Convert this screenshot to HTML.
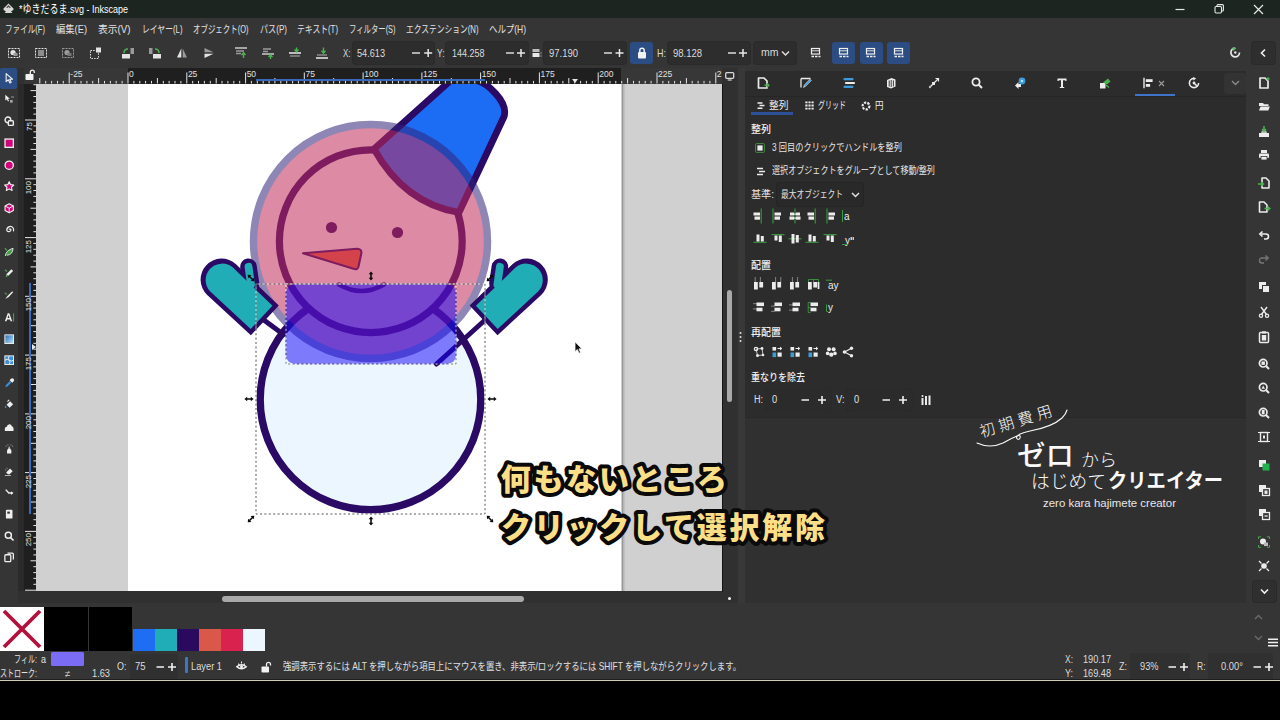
<!DOCTYPE html>
<html lang="ja"><head><meta charset="utf-8"><title>*ゆきだるま.svg - Inkscape</title>
<style>
html,body{margin:0;padding:0}
body{width:1280px;height:720px;position:relative;overflow:hidden;background:#353535;font-family:'Liberation Sans','Noto Sans CJK JP',sans-serif;}
.t{position:absolute;white-space:nowrap;line-height:1;transform-origin:0 50%;}
.a{position:absolute}
svg{position:absolute;overflow:visible}
</style></head>
<body>
<div class="a" style="left:0px;top:0px;width:1280px;height:18px;background:#1c2520;"></div>
<svg style="left:3px;top:3px;" width="11" height="12" viewBox="0 0 11 12"><path d="M5.5 0.5 L10.5 5.5 Q11 7 9.5 7.5 L8 8.5 L9.5 10 L1.5 10 L3 8.5 L1.5 7.5 Q0 7 0.5 5.5 Z" fill="#d8d8d8"/><path d="M5.5 2 L8 4.5 L6.5 5 L5.5 4 L4.5 5 L3 4.5Z" fill="#555"/></svg>
<svg style="left:1175px;top:4px;" width="100" height="11" viewBox="0 0 100 11"><path d="M0.5 5.5 H9.5" stroke="#e8e8e8" stroke-width="1.2"/><rect x="40" y="2.5" width="6.5" height="6.5" rx="1.2" fill="none" stroke="#e8e8e8" stroke-width="1.1"/><path d="M42 2.3 V1.6 Q42 0.6 43 0.6 H47.4 Q48.4 0.6 48.4 1.6 V6 Q48.4 7 47.4 7 H46.8" fill="none" stroke="#e8e8e8" stroke-width="1.1"/><path d="M79 1 L88 10 M88 1 L79 10" stroke="#e8e8e8" stroke-width="1.2"/></svg>
<svg style="left:8px;top:47px;" width="12" height="12" viewBox="0 0 12 12"><rect x="0.5" y="1.5" width="11" height="9" fill="none" stroke="#e4e4e4" stroke-dasharray="2 1"/><circle cx="5" cy="5.5" r="2.6" fill="#e4e4e4"/><rect x="5.5" y="6" width="4" height="3" fill="#9a9a9a"/></svg>
<svg style="left:35px;top:47px;" width="12" height="12" viewBox="0 0 12 12"><rect x="0.5" y="1.5" width="11" height="9" fill="none" stroke="#e4e4e4" stroke-dasharray="2 1"/><path d="M3 4H9M3 6H9M3 8H9" stroke="#e4e4e4" stroke-width="1.2"/></svg>
<svg style="left:62px;top:47px;" width="12" height="12" viewBox="0 0 12 12"><rect x="0.5" y="1.5" width="11" height="9" fill="none" stroke="#9a9a9a" stroke-dasharray="2 1"/><circle cx="5" cy="5.5" r="2.6" fill="#9a9a9a"/><rect x="5.5" y="6" width="4" height="3" fill="#777"/></svg>
<svg style="left:90px;top:47px;" width="12" height="12" viewBox="0 0 12 12"><rect x="0.5" y="3.5" width="8" height="8" fill="none" stroke="#e4e4e4" stroke-dasharray="1.5 1.2"/><rect x="6" y="0.5" width="5" height="5" fill="#e4e4e4"/></svg>
<svg style="left:122px;top:47px;" width="12" height="12" viewBox="0 0 12 12"><rect x="0" y="7" width="8" height="4.5" fill="#e4e4e4"/><rect x="8.5" y="1" width="3.5" height="6" fill="#9a9a9a"/><path d="M2 6 Q2 2 6 2" fill="none" stroke="#4caf50" stroke-width="1.6"/></svg>
<svg style="left:149px;top:47px;" width="12" height="12" viewBox="0 0 12 12"><rect x="4" y="7" width="8" height="4.5" fill="#e4e4e4"/><rect x="0" y="1" width="3.5" height="6" fill="#9a9a9a"/><path d="M10 6 Q10 2 6 2" fill="none" stroke="#4caf50" stroke-width="1.6"/></svg>
<svg style="left:176px;top:47px;" width="12" height="12" viewBox="0 0 12 12"><path d="M5.3 1.5 V10.5 H1 Z" fill="#e4e4e4"/><path d="M6.7 1.5 V10.5 H11 Z" fill="#9a9a9a"/></svg>
<svg style="left:203px;top:47px;" width="12" height="12" viewBox="0 0 12 12"><path d="M1.5 5.3 H10.5 L1.5 1 Z" fill="#9a9a9a"/><path d="M1.5 6.7 H10.5 L1.5 11 Z" fill="#e4e4e4"/></svg>
<svg style="left:235px;top:47px;" width="12" height="12" viewBox="0 0 12 12"><path d="M0 1H12" stroke="#e4e4e4" stroke-width="1.3"/><path d="M1 4H9M1 6.5H6" stroke="#9a9a9a" stroke-width="1.3"/><path d="M8.5 11 V6 M6.5 8 L8.5 5.5 L10.5 8" stroke="#4caf50" stroke-width="1.4" fill="none"/></svg>
<svg style="left:262px;top:47px;" width="12" height="12" viewBox="0 0 12 12"><path d="M1 2H9M1 4.5H6" stroke="#9a9a9a" stroke-width="1.3"/><path d="M0 7H12" stroke="#e4e4e4" stroke-width="1.3"/><path d="M8.5 12 V8.5 M6.5 10 L8.5 8 L10.5 10" stroke="#4caf50" stroke-width="1.4" fill="none"/></svg>
<svg style="left:289px;top:47px;" width="12" height="12" viewBox="0 0 12 12"><path d="M0 6H12" stroke="#e4e4e4" stroke-width="1.6"/><path d="M1 9H11" stroke="#9a9a9a" stroke-width="1.3"/><path d="M7.5 0.5 V4 M5.5 2.5 L7.5 4.8 L9.5 2.5" stroke="#4caf50" stroke-width="1.4" fill="none"/></svg>
<svg style="left:316px;top:47px;" width="12" height="12" viewBox="0 0 12 12"><path d="M1 8H11" stroke="#9a9a9a" stroke-width="1.3"/><path d="M0 11H12" stroke="#e4e4e4" stroke-width="1.6"/><path d="M7.5 0.5 V5.5 M5.5 3.8 L7.5 6.2 L9.5 3.8" stroke="#4caf50" stroke-width="1.4" fill="none"/></svg>
<div class="a" style="left:352.6px;top:41.5px;width:81.0px;height:22.5px;background:#2d2d2d;border-radius:3px;box-shadow:0 0 0 1px #2a2a2a;"></div><svg style="left:411.5px;top:47.75px;" width="21.19999999999999" height="10" viewBox="0 0 21.19999999999999 10"><path d="M0 5H8" stroke="#e8e8e8" stroke-width="1.4"/><path d="M12.199999999999989 5h8M16.19999999999999 1v8" stroke="#e8e8e8" stroke-width="1.5"/></svg>
<div class="a" style="left:446px;top:41.5px;width:82px;height:22.5px;background:#2d2d2d;border-radius:3px;box-shadow:0 0 0 1px #2a2a2a;"></div><svg style="left:506px;top:47.75px;" width="20" height="10" viewBox="0 0 20 10"><path d="M0 5H8" stroke="#e8e8e8" stroke-width="1.4"/><path d="M11 5h8M15 1v8" stroke="#e8e8e8" stroke-width="1.5"/></svg>
<svg style="left:531.5px;top:48px;" width="10" height="10" viewBox="0 0 10 10"><rect x="0.5" y="1" width="7" height="3" fill="#bbb"/><rect x="0.5" y="5" width="7" height="4" fill="#e8e8e8"/><path d="M9 7.5v1" stroke="#ddd"/><path d="M9 4.5v1" stroke="#ddd"/></svg>
<div class="a" style="left:543.8px;top:41.5px;width:82.20000000000005px;height:22.5px;background:#2d2d2d;border-radius:3px;box-shadow:0 0 0 1px #2a2a2a;"></div><svg style="left:604px;top:47.75px;" width="20.5" height="10" viewBox="0 0 20.5 10"><path d="M0 5H8" stroke="#e8e8e8" stroke-width="1.4"/><path d="M11.5 5h8M15.5 1v8" stroke="#e8e8e8" stroke-width="1.5"/></svg>
<div class="a" style="left:630px;top:41.5px;width:23px;height:22.5px;background:#2b4d84;border-radius:3px;"></div>
<svg style="left:636.5px;top:46.5px;" width="10" height="12" viewBox="0 0 10 12"><rect x="1" y="5" width="8" height="6.5" rx="1" fill="#f2f2f2"/><path d="M2.8 5.5V3.5a2.2 2.2 0 0 1 4.4 0V5.5" fill="none" stroke="#f2f2f2" stroke-width="1.5"/></svg>
<div class="a" style="left:668px;top:41.5px;width:81.60000000000002px;height:22.5px;background:#2d2d2d;border-radius:3px;box-shadow:0 0 0 1px #2a2a2a;"></div><svg style="left:728px;top:47.75px;" width="20" height="10" viewBox="0 0 20 10"><path d="M0 5H8" stroke="#e8e8e8" stroke-width="1.4"/><path d="M11 5h8M15 1v8" stroke="#e8e8e8" stroke-width="1.5"/></svg>
<div class="a" style="left:753.6px;top:41.5px;width:42.4px;height:22.5px;background:#2d2d2d;border-radius:3px;box-shadow:0 0 0 1px #2a2a2a;"></div>
<svg style="left:781px;top:50px;" width="9" height="7" viewBox="0 0 9 7"><path d="M1 1.5 L4.5 5 L8 1.5" fill="none" stroke="#e0e0e0" stroke-width="1.5"/></svg>
<svg style="left:811px;top:48px;" width="10" height="11" viewBox="0 0 10 11"><rect x="0.5" y="0.5" width="8" height="5.5" fill="none" stroke="#f0f0f0" stroke-width="1.2"/><path d="M1 2.8h7" stroke="#ddd" stroke-width="1"/><path d="M0.5 8.5h9" stroke="#f0f0f0" stroke-width="1.6" stroke-dasharray="2.5 1"/></svg>
<div class="a" style="left:832.0px;top:41.5px;width:23px;height:22.5px;background:#2b4d84;border-radius:3px;"></div><svg style="left:838.5px;top:48px;" width="10" height="11" viewBox="0 0 10 11"><rect x="0.5" y="0.5" width="8" height="5.5" fill="none" stroke="#f0f0f0" stroke-width="1.2"/><path d="M1 2.8h7" stroke="#ddd" stroke-width="1"/><path d="M0.5 8.5h9" stroke="#f0f0f0" stroke-width="1.6" stroke-dasharray="2.5 1"/></svg>
<div class="a" style="left:859.5px;top:41.5px;width:23px;height:22.5px;background:#2b4d84;border-radius:3px;"></div><svg style="left:866px;top:48px;" width="10" height="11" viewBox="0 0 10 11"><rect x="0.5" y="0.5" width="8" height="5.5" fill="none" stroke="#f0f0f0" stroke-width="1.2"/><path d="M1 2.8h7" stroke="#ddd" stroke-width="1"/><path d="M0.5 8.5h9" stroke="#f0f0f0" stroke-width="1.6" stroke-dasharray="2.5 1"/></svg>
<div class="a" style="left:887.0px;top:41.5px;width:23px;height:22.5px;background:#2b4d84;border-radius:3px;"></div><svg style="left:893.5px;top:48px;" width="10" height="11" viewBox="0 0 10 11"><rect x="0.5" y="0.5" width="8" height="5.5" fill="none" stroke="#f0f0f0" stroke-width="1.2"/><path d="M1 2.8h7" stroke="#ddd" stroke-width="1"/><path d="M0.5 8.5h9" stroke="#f0f0f0" stroke-width="1.6" stroke-dasharray="2.5 1"/></svg>
<svg style="left:1229px;top:46px;" width="13" height="13" viewBox="0 0 13 13"><path d="M10.5 6.5 A4.3 4.3 0 1 1 6.2 2.2" fill="none" stroke="#e8e8e8" stroke-width="1.7"/><path d="M3 1.5 L7.5 2.2 L4 5Z" fill="#5dbb63"/><circle cx="6.3" cy="6.5" r="1.2" fill="#e8e8e8"/></svg>
<div class="a" style="left:1252px;top:41.5px;width:23px;height:22.5px;background:#2e2e2e;border-radius:3px;box-shadow:0 0 0 1px #2a2a2a;"></div>
<svg style="left:1259px;top:48px;" width="8" height="10" viewBox="0 0 8 10"><path d="M6 1.5 L2.5 5 L6 8.5" fill="none" stroke="#f0f0f0" stroke-width="1.6"/></svg>
<div class="a" style="left:0px;top:68px;width:18px;height:523px;background:#353535;"></div>
<div class="a" style="left:0px;top:67.5px;width:16.5px;height:21px;background:#2b4d84;border-radius:2px;"></div>
<svg style="left:3.8px;top:72.8px" width="10.4" height="10.4" viewBox="0 0 12 12"><path d="M2.5 0.8 V10 L5 7.8 L6.8 11.5 L8.3 10.8 L6.6 7.2 H9.8 Z" fill="#2b4d84" stroke="#efefef" stroke-width="1.3" stroke-linejoin="round"/></svg>
<svg style="left:3.8px;top:94.2px" width="10.4" height="10.4" viewBox="0 0 12 12"><path d="M1.5 1 V7.5 L3.3 6 L4.6 8.6 L5.8 8 L4.6 5.6 H6.8 Z" fill="#efefef"/><rect x="7" y="7" width="3" height="3" fill="#aaa"/><path d="M8 3.5h3.5" stroke="#aaa"/></svg>
<svg style="left:3.8px;top:115.8px" width="10.4" height="10.4" viewBox="0 0 12 12"><circle cx="4.5" cy="4.5" r="3.3" fill="none" stroke="#efefef" stroke-width="1.6"/><rect x="5" y="5.5" width="5.8" height="5.3" rx="1" fill="#353535" stroke="#efefef" stroke-width="1.6"/></svg>
<svg style="left:3.8px;top:138.3px" width="10.4" height="10.4" viewBox="0 0 12 12"><rect x="1.2" y="1.2" width="9.6" height="9.6" fill="#d4007a" stroke="#efefef" stroke-width="1.5"/></svg>
<svg style="left:3.8px;top:159.8px" width="10.4" height="10.4" viewBox="0 0 12 12"><circle cx="6" cy="6" r="4.8" fill="#d4007a" stroke="#efefef" stroke-width="1.5"/></svg>
<svg style="left:3.8px;top:181.3px" width="10.4" height="10.4" viewBox="0 0 12 12"><path d="M6 0.8 L7.6 4.2 L11.3 4.6 L8.6 7.2 L9.3 10.9 L6 9.1 L2.7 10.9 L3.4 7.2 L0.7 4.6 L4.4 4.2Z" fill="#d4007a" stroke="#efefef" stroke-width="1.3" stroke-linejoin="round"/></svg>
<svg style="left:3.8px;top:202.8px" width="10.4" height="10.4" viewBox="0 0 12 12"><path d="M6 0.8 L10.8 3.4 V8.7 L6 11.3 L1.2 8.7 V3.4Z" fill="#d4007a" stroke="#efefef" stroke-width="1.3" stroke-linejoin="round"/><path d="M1.2 3.4 L6 6 L10.8 3.4 M6 6 V11.3" fill="none" stroke="#efefef" stroke-width="1.1"/></svg>
<svg style="left:3.8px;top:224.3px" width="10.4" height="10.4" viewBox="0 0 12 12"><path d="M6 6 a1.3 1.3 0 0 1 2 1 a2.6 2.6 0 0 1 -4.6 0.8 a4 4 0 0 1 7 -3.4 a5 5 0 0 1 0.6 3.6" fill="none" stroke="#efefef" stroke-width="1.4" stroke-linecap="round"/></svg>
<svg style="left:3.8px;top:246.8px" width="10.4" height="10.4" viewBox="0 0 12 12"><path d="M1.5 10.5 Q2 4 10.5 1.5 Q10 9 3.5 9.5" fill="#43a047" stroke="#efefef" stroke-width="1"/><path d="M1 1.5l2.5 2.5" stroke="#43a047" stroke-width="1.5"/></svg>
<svg style="left:3.8px;top:268.3px" width="10.4" height="10.4" viewBox="0 0 12 12"><path d="M2 10 L3 7 L8.5 1.5 L10.5 3.5 L5 9 Z" fill="#efefef"/><path d="M2 10 L3 7 L5 9Z" fill="#43a047"/><path d="M1 2l2.5 2" stroke="#43a047" stroke-width="1.4"/></svg>
<svg style="left:3.8px;top:290.3px" width="10.4" height="10.4" viewBox="0 0 12 12"><path d="M1.5 10.5 L4 7 L9.5 1.5 L10.5 2.5 L5.5 8 Z" fill="#efefef"/><path d="M1 3l2.2 2.2" stroke="#43a047" stroke-width="1.4"/></svg>
<svg style="left:3.8px;top:311.8px" width="10.4" height="10.4" viewBox="0 0 12 12"><path d="M1 10.8 L4.3 1.5 H6.2 L9.5 10.8 H7.6 L6.9 8.6 H3.6 L2.9 10.8Z M4.1 7 H6.4 L5.25 3.4Z" fill="#efefef" fill-rule="evenodd"/><path d="M11 1.5v9.5" stroke="#43a047" stroke-width="1.3"/></svg>
<svg style="left:3.8px;top:333.6px" width="10.4" height="10.4" viewBox="0 0 12 12"><defs><linearGradient id="lg1" x1="0" y1="0" x2="1" y2="1"><stop offset="0" stop-color="#1f6fb8"/><stop offset="1" stop-color="#bfe3ff"/></linearGradient></defs><rect x="1" y="1" width="10" height="10" fill="url(#lg1)" stroke="#efefef" stroke-width="1.1"/></svg>
<svg style="left:3.8px;top:355.3px" width="10.4" height="10.4" viewBox="0 0 12 12"><rect x="1" y="1" width="10" height="10" fill="#3d8fd6" stroke="#efefef" stroke-width="1.1"/><path d="M1 6 Q4 4 6 6 T11 6 M6 1 Q4 4 6 6 T6 11" fill="none" stroke="#efefef" stroke-width="1.1"/></svg>
<svg style="left:3.8px;top:377.8px" width="10.4" height="10.4" viewBox="0 0 12 12"><path d="M1.5 10.5 L2.3 8 L6.8 3.5 L8.5 5.2 L4 9.7 Z" fill="#3d8fd6"/><path d="M6.5 2.5 L8 1 a1.5 1.5 0 0 1 3 3 L9.5 5.5 Z" fill="#efefef"/></svg>
<svg style="left:3.8px;top:399.3px" width="10.4" height="10.4" viewBox="0 0 12 12"><path d="M3 6.5 L7 2.5 L10.5 6 L6.5 10 Z" fill="#efefef"/><path d="M1 9 Q1.8 6.5 2.8 9 Q2.8 10.8 1.9 10.8 Q1 10.8 1 9Z" fill="#3d8fd6"/><path d="M4 3l2-2" stroke="#efefef" stroke-width="1.2"/></svg>
<svg style="left:3.8px;top:422.3px" width="10.4" height="10.4" viewBox="0 0 12 12"><path d="M1 10.5 V7.5 Q1 5.5 3.2 5.5 Q3.6 2.5 6.3 2.5 Q8.6 2.5 9 5 Q11 5.3 11 7.5 V10.5Z" fill="#efefef"/></svg>
<svg style="left:3.8px;top:443.8px" width="10.4" height="10.4" viewBox="0 0 12 12"><path d="M3.5 11 V7.5 L5 5 H7 L8.5 7.5 V11Z" fill="#efefef"/><rect x="5.2" y="3" width="1.6" height="2" fill="#bbb"/><path d="M2 2.5h1M4 1h1M7.5 1h1M9.5 2.5h1" stroke="#bbb"/></svg>
<svg style="left:3.8px;top:465.8px" width="10.4" height="10.4" viewBox="0 0 12 12"><path d="M4.5 9.5 L2.5 7.5 L7 3 L10 6 L6.5 9.5Z" fill="#efefef"/><path d="M1 11h7" stroke="#bbb" stroke-width="1.1"/><path d="M3 2l1 1M1.5 4.5h1.2" stroke="#bbb"/></svg>
<svg style="left:3.8px;top:487.3px" width="10.4" height="10.4" viewBox="0 0 12 12"><path d="M2 3 L5.5 7 L10 7" fill="none" stroke="#efefef" stroke-width="1.6"/><path d="M8 4.8 L10.8 7 L8 9.2Z" fill="#efefef"/></svg>
<svg style="left:3.8px;top:508.8px" width="10.4" height="10.4" viewBox="0 0 12 12"><rect x="2.2" y="1" width="7.6" height="10" rx="1" fill="#efefef"/><rect x="3.8" y="3" width="3" height="2.4" fill="#353535"/></svg>
<svg style="left:3.8px;top:530.8px" width="10.4" height="10.4" viewBox="0 0 12 12"><circle cx="5" cy="5" r="3.5" fill="none" stroke="#efefef" stroke-width="1.7"/><path d="M7.6 7.6 L11 11" stroke="#efefef" stroke-width="1.9"/></svg>
<svg style="left:3.8px;top:552.3px" width="10.4" height="10.4" viewBox="0 0 12 12"><rect x="1" y="3.2" width="6.8" height="7.8" rx="1" fill="none" stroke="#efefef" stroke-width="1.5"/><path d="M4 1.3 H9.6 Q10.8 1.3 10.8 2.5 V8.6" fill="none" stroke="#efefef" stroke-width="1.5"/></svg>
<div class="a" style="left:18px;top:68px;width:720px;height:535px;background:#303030;"></div>
<div class="a" style="left:738px;top:68px;width:8px;height:535px;background:#383838;"></div>
<div class="a" style="left:722px;top:83.5px;width:1px;height:508px;background:#141414;"></div>
<div class="a" style="left:18.3px;top:83.5px;width:5.4px;height:507.5px;background:#2a2a2a;"></div>
<div class="a" style="left:35px;top:68px;width:687px;height:15.5px;background:#373737;"></div>
<div class="a" style="left:127.5px;top:68px;width:493.6px;height:15.5px;background:#1f1f1f;"></div>
<div class="a" style="left:23.5px;top:68px;width:12px;height:523px;background:#1f1f1f;"></div>
<div class="a" style="left:23.5px;top:68px;width:12px;height:15.5px;background:#353535;"></div>
<svg style="left:25px;top:69px;" width="10" height="12" viewBox="0 0 10 12"><rect x="0.5" y="5" width="8" height="6" rx="0.8" fill="#f2f2f2"/><path d="M5.3 5V3.2a2 2 0 0 1 4 0V4" fill="none" stroke="#f2f2f2" stroke-width="1.3"/></svg>
<svg style="left:23.5px;top:68px;" width="698.5" height="15.5" viewBox="0 0 698.5 15.5"><path d="M15.8 15.5v-5.5 M21.7 15.5v-2.6 M27.6 15.5v-2.6 M33.5 15.5v-2.6 M39.3 15.5v-2.6 M45.2 15.5v-11 M51.1 15.5v-2.6 M57.0 15.5v-2.6 M62.9 15.5v-2.6 M68.7 15.5v-2.6 M74.6 15.5v-5.5 M80.5 15.5v-2.6 M86.4 15.5v-2.6 M92.2 15.5v-2.6 M98.1 15.5v-2.6 M104.0 15.5v-11 M109.9 15.5v-2.6 M115.8 15.5v-2.6 M121.6 15.5v-2.6 M127.5 15.5v-2.6 M133.4 15.5v-5.5 M139.3 15.5v-2.6 M145.1 15.5v-2.6 M151.0 15.5v-2.6 M156.9 15.5v-2.6 M162.8 15.5v-11 M168.7 15.5v-2.6 M174.5 15.5v-2.6 M180.4 15.5v-2.6 M186.3 15.5v-2.6 M192.2 15.5v-5.5 M198.0 15.5v-2.6 M203.9 15.5v-2.6 M209.8 15.5v-2.6 M215.7 15.5v-2.6 M221.6 15.5v-11 M227.4 15.5v-2.6 M233.3 15.5v-2.6 M239.2 15.5v-2.6 M245.1 15.5v-2.6 M250.9 15.5v-5.5 M256.8 15.5v-2.6 M262.7 15.5v-2.6 M268.6 15.5v-2.6 M274.4 15.5v-2.6 M280.3 15.5v-11 M286.2 15.5v-2.6 M292.1 15.5v-2.6 M298.0 15.5v-2.6 M303.8 15.5v-2.6 M309.7 15.5v-5.5 M315.6 15.5v-2.6 M321.5 15.5v-2.6 M327.3 15.5v-2.6 M333.2 15.5v-2.6 M339.1 15.5v-11 M345.0 15.5v-2.6 M350.9 15.5v-2.6 M356.7 15.5v-2.6 M362.6 15.5v-2.6 M368.5 15.5v-5.5 M374.4 15.5v-2.6 M380.2 15.5v-2.6 M386.1 15.5v-2.6 M392.0 15.5v-2.6 M397.9 15.5v-11 M403.8 15.5v-2.6 M409.6 15.5v-2.6 M415.5 15.5v-2.6 M421.4 15.5v-2.6 M427.3 15.5v-5.5 M433.1 15.5v-2.6 M439.0 15.5v-2.6 M444.9 15.5v-2.6 M450.8 15.5v-2.6 M456.6 15.5v-11 M462.5 15.5v-2.6 M468.4 15.5v-2.6 M474.3 15.5v-2.6 M480.2 15.5v-2.6 M486.0 15.5v-5.5 M491.9 15.5v-2.6 M497.8 15.5v-2.6 M503.7 15.5v-2.6 M509.5 15.5v-2.6 M515.4 15.5v-11 M521.3 15.5v-2.6 M527.2 15.5v-2.6 M533.1 15.5v-2.6 M538.9 15.5v-2.6 M544.8 15.5v-5.5 M550.7 15.5v-2.6 M556.6 15.5v-2.6 M562.4 15.5v-2.6 M568.3 15.5v-2.6 M574.2 15.5v-11 M580.1 15.5v-2.6 M586.0 15.5v-2.6 M591.8 15.5v-2.6 M597.7 15.5v-2.6 M603.6 15.5v-5.5 M609.5 15.5v-2.6 M615.3 15.5v-2.6 M621.2 15.5v-2.6 M627.1 15.5v-2.6 M633.0 15.5v-11 M638.9 15.5v-2.6 M644.7 15.5v-2.6 M650.6 15.5v-2.6 M656.5 15.5v-2.6 M662.4 15.5v-5.5 M668.2 15.5v-2.6 M674.1 15.5v-2.6 M680.0 15.5v-2.6 M685.9 15.5v-2.6 M691.8 15.5v-11" stroke="#e6e6e6" stroke-width="1" fill="none"/></svg>
<svg style="left:23.5px;top:68px;" width="12" height="523" viewBox="0 0 12 523"><path d="M12 16.7h-2.6 M12 22.6h-5.5 M12 28.5h-2.6 M12 34.4h-2.6 M12 40.2h-2.6 M12 46.1h-2.6 M12 52.0h-11 M12 57.9h-2.6 M12 63.8h-2.6 M12 69.6h-2.6 M12 75.5h-2.6 M12 81.4h-5.5 M12 87.3h-2.6 M12 93.1h-2.6 M12 99.0h-2.6 M12 104.9h-2.6 M12 110.8h-11 M12 116.7h-2.6 M12 122.5h-2.6 M12 128.4h-2.6 M12 134.3h-2.6 M12 140.2h-5.5 M12 146.0h-2.6 M12 151.9h-2.6 M12 157.8h-2.6 M12 163.7h-2.6 M12 169.6h-11 M12 175.4h-2.6 M12 181.3h-2.6 M12 187.2h-2.6 M12 193.1h-2.6 M12 198.9h-5.5 M12 204.8h-2.6 M12 210.7h-2.6 M12 216.6h-2.6 M12 222.4h-2.6 M12 228.3h-11 M12 234.2h-2.6 M12 240.1h-2.6 M12 246.0h-2.6 M12 251.8h-2.6 M12 257.7h-5.5 M12 263.6h-2.6 M12 269.5h-2.6 M12 275.3h-2.6 M12 281.2h-2.6 M12 287.1h-11 M12 293.0h-2.6 M12 298.9h-2.6 M12 304.7h-2.6 M12 310.6h-2.6 M12 316.5h-5.5 M12 322.4h-2.6 M12 328.2h-2.6 M12 334.1h-2.6 M12 340.0h-2.6 M12 345.9h-11 M12 351.8h-2.6 M12 357.6h-2.6 M12 363.5h-2.6 M12 369.4h-2.6 M12 375.3h-5.5 M12 381.1h-2.6 M12 387.0h-2.6 M12 392.9h-2.6 M12 398.8h-2.6 M12 404.6h-11 M12 410.5h-2.6 M12 416.4h-2.6 M12 422.3h-2.6 M12 428.2h-2.6 M12 434.0h-5.5 M12 439.9h-2.6 M12 445.8h-2.6 M12 451.7h-2.6 M12 457.5h-2.6 M12 463.4h-11 M12 469.3h-2.6 M12 475.2h-2.6 M12 481.1h-2.6 M12 486.9h-2.6 M12 492.8h-5.5 M12 498.7h-2.6 M12 504.6h-2.6 M12 510.4h-2.6 M12 516.3h-2.6 M12 522.2h-11" stroke="#e6e6e6" stroke-width="1" fill="none"/></svg>
<div class="a" style="left:255.5px;top:79.1px;width:229px;height:1.7px;background:#3769bd;"></div>
<div class="a" style="left:29.4px;top:283px;width:1.8px;height:230.6px;background:#3769bd;"></div>
<svg style="left:572px;top:79px;" width="6" height="4" viewBox="0 0 6 4"><path d="M0 0H6L3 4Z" fill="#e8e8e8"/></svg>
<svg style="left:31.5px;top:344px;" width="4" height="6" viewBox="0 0 4 6"><path d="M0 0V6L4 3Z" fill="#e8e8e8"/></svg>
<div class="a" style="left:221.5px;top:596px;width:302px;height:5.6px;background:#a9a9a9;border-radius:3px;"></div>
<div class="a" style="left:727px;top:290px;width:4.6px;height:112px;background:#a9a9a9;border-radius:3px;"></div>
<svg style="left:725px;top:71.5px;" width="10" height="9" viewBox="0 0 10 9"><rect x="0.7" y="0.7" width="8" height="5.6" rx="1" fill="none" stroke="#d8d8d8" stroke-width="1.3"/><path d="M2.7 8h4" stroke="#d8d8d8" stroke-width="1.2"/></svg>
<div class="a" style="left:727.6px;top:596.8px;width:3.4px;height:3.4px;background:#f4f4f4;border-radius:50%;"></div>
<svg style="left:738.5px;top:331px;" width="3" height="12" viewBox="0 0 3 12"><circle cx="1.5" cy="2" r="1" fill="#e0e0e0"/><circle cx="1.5" cy="6" r="1" fill="#e0e0e0"/><circle cx="1.5" cy="10" r="1" fill="#e0e0e0"/></svg>
<div class="a" style="left:0px;top:607px;width:44px;height:44px;background:#ffffff;"></div>
<svg style="left:0px;top:607px;" width="44" height="44" viewBox="0 0 44 44"><path d="M4 4 L40 40 M40 4 L4 40" stroke="#b4103c" stroke-width="3.8"/></svg>
<div class="a" style="left:44px;top:607px;width:44.3px;height:44px;background:#000;"></div>
<div class="a" style="left:88.8px;top:607px;width:43px;height:44px;background:#000;"></div>
<div class="a" style="left:132.5px;top:629px;width:22px;height:22px;background:#1f6df2;"></div>
<div class="a" style="left:154.5px;top:629px;width:22px;height:22px;background:#21adb6;"></div>
<div class="a" style="left:176.5px;top:629px;width:22px;height:22px;background:#2a0a5e;"></div>
<div class="a" style="left:198.5px;top:629px;width:22px;height:22px;background:#d9584a;"></div>
<div class="a" style="left:220.5px;top:629px;width:22px;height:22px;background:#d9234e;"></div>
<div class="a" style="left:242.5px;top:629px;width:22px;height:22px;background:#ebf6ff;"></div>
<div class="a" style="left:51px;top:652px;width:33px;height:13.5px;background:#7b6cf6;border-radius:1.5px;"></div>
<div class="a" style="left:129.5px;top:654px;width:48px;height:26px;background:#303030;border-radius:3px 3px 0 0;"></div>
<svg style="left:156px;top:662px;" width="24" height="10" viewBox="0 0 24 10"><path d="M0.5 5H8" stroke="#f0f0f0" stroke-width="1.5"/><path d="M12 5h8M16 1v8" stroke="#f0f0f0" stroke-width="1.6"/></svg>
<div class="a" style="left:185.3px;top:657px;width:2.6px;height:16px;background:#3f74c9;border-radius:1px;"></div>
<svg style="left:235.8px;top:660.5px;" width="11" height="10" viewBox="0 0 11 10"><path d="M0.8 5.8 Q5.5 1.8 10.2 5.8 Q5.5 9.8 0.8 5.8Z" fill="none" stroke="#f2f2f2" stroke-width="1.5"/><circle cx="5.5" cy="5.8" r="1.5" fill="#f2f2f2"/><path d="M2.3 2.6l0.9 1.3M5.5 0.6v2M8.7 2.6l-0.9 1.3" stroke="#f2f2f2" stroke-width="1.1"/></svg>
<svg style="left:260.5px;top:661px;" width="11" height="12" viewBox="0 0 11 12"><rect x="0.5" y="5.5" width="7.5" height="6" rx="0.8" fill="#f2f2f2"/><path d="M5.5 5.5V3.4a2 2 0 0 1 4 0V4.6" fill="none" stroke="#f2f2f2" stroke-width="1.3"/></svg>
<div class="a" style="left:1129.5px;top:653px;width:60px;height:27px;background:#303030;border-radius:3px 3px 0 0;"></div>
<svg style="left:1168px;top:662px;" width="24" height="10" viewBox="0 0 24 10"><path d="M0.5 5H8" stroke="#f0f0f0" stroke-width="1.5"/><path d="M12 5h8M16 1v8" stroke="#f0f0f0" stroke-width="1.6"/></svg>
<div class="a" style="left:1208px;top:653px;width:65px;height:27px;background:#303030;border-radius:3px 3px 0 0;"></div>
<svg style="left:1252.5px;top:662px;" width="24" height="10" viewBox="0 0 24 10"><path d="M0.5 5H8" stroke="#f0f0f0" stroke-width="1.5"/><path d="M12 5h8M16 1v8" stroke="#f0f0f0" stroke-width="1.6"/></svg>
<svg style="left:1254px;top:614px;" width="9" height="6" viewBox="0 0 9 6"><path d="M1 5 L4.5 1.5 L8 5" fill="none" stroke="#6a6a6a" stroke-width="1.4"/></svg>
<svg style="left:1254px;top:635px;" width="9" height="6" viewBox="0 0 9 6"><path d="M1 1 L4.5 4.5 L8 1" fill="none" stroke="#6a6a6a" stroke-width="1.4"/></svg>
<svg style="left:1268px;top:637.5px;" width="10" height="9" viewBox="0 0 10 9"><path d="M0 1.2h10M0 4.5h10M0 7.8h10" stroke="#f0f0f0" stroke-width="1.5"/></svg>
<div class="a" style="left:0px;top:679.6px;width:1280px;height:41px;background:#000;"></div>
<div class="a" style="left:0px;top:679.6px;width:1280px;height:1.8px;background:#cfcdb4;"></div>
<div class="a" style="left:0px;top:678.8px;width:1280px;height:0.8px;background:#1e1e1e;"></div>
<div class="a" style="left:35.5px;top:83.5px;width:686.5px;height:507.5px;overflow:hidden;background:#d0d0d0"><svg style="left:0;top:0;overflow:hidden" width="686.5" height="507.5" viewBox="0 0 686.5 507.5"><rect x="0" y="0" width="686.5" height="507.5" fill="#d0d0d0"/><defs><linearGradient id="pgsh" x1="0" y1="0" x2="1" y2="0"><stop offset="0" stop-color="#a4a4a4"/><stop offset="1" stop-color="#d0d0d0"/></linearGradient></defs><rect x="586.1" y="-5" width="3.6" height="517.5" fill="url(#pgsh)"/><rect x="585.4" y="-5" width="1" height="517.5" fill="#7c7c7c"/><rect x="92.0" y="-5" width="493.5" height="517.5" fill="#ffffff"/><g transform="translate(-35.5 -83.5)"><circle cx="370" cy="399" r="110.3" fill="#ebf6ff" stroke="#2a0a64" stroke-width="7.4"/><path d="M264 320 L283 334" stroke="#2a0a64" stroke-width="5" stroke-linecap="round"/><path d="M484 320 L436 363.5" stroke="#2a0a64" stroke-width="5" stroke-linecap="round"/><circle cx="370.3" cy="240.7" r="91.4" fill="#ffffff" stroke="#2a0a64" stroke-width="7.2"/><path d="M373.5 148.5 L454.5 76 L476 80 C486 82 508 101 503.6 116 L458.5 212 Q404 203 373.5 148.5 Z" fill="#1c6cf4" stroke="#2a0a64" stroke-width="6.8" stroke-linejoin="miter" stroke-miterlimit="6"/><circle cx="331" cy="227" r="5.6" fill="#2a0a64"/><circle cx="397" cy="232" r="5.6" fill="#2a0a64"/><path d="M302.5 252.8 L356.5 248.2 Q361.5 248.4 360.8 253 L358 266 Q357 269.8 353 268.3 Z" fill="#eb5f3a" stroke="#2a0a64" stroke-width="2.1" stroke-linejoin="round"/><path d="M338.5 284 Q361 297 383.5 284" fill="none" stroke="#2a0a64" stroke-width="4.4" stroke-linecap="round"/><circle cx="370" cy="241" r="117" fill="#c32c5b" stroke="#33247a" stroke-width="7.4" opacity="0.55"/><g transform=""><path d="M248 266.3 L250.5 283" stroke="#2a0a64" stroke-width="16.6" stroke-linecap="round"/><path d="M250.4 334.8 L206.7 294.4 A21 21 0 0 1 235.5 263.8 L278.3 305 Z" fill="#2a0a64"/><path d="M248 266.3 L250.5 284" stroke="#21adb6" stroke-width="7.8" stroke-linecap="round"/><path d="M250.2 328.5 L209.8 291.1 A16.5 16.5 0 0 1 232.4 267.1 L272 305.2 Z" fill="#21adb6"/></g><g transform="translate(747.4 0) scale(-1 1)"><path d="M248 266.3 L250.5 283" stroke="#2a0a64" stroke-width="16.6" stroke-linecap="round"/><path d="M250.4 334.8 L206.7 294.4 A21 21 0 0 1 235.5 263.8 L278.3 305 Z" fill="#2a0a64"/><path d="M248 266.3 L250.5 284" stroke="#21adb6" stroke-width="7.8" stroke-linecap="round"/><path d="M250.2 328.5 L209.8 291.1 A16.5 16.5 0 0 1 232.4 267.1 L272 305.2 Z" fill="#21adb6"/></g><rect x="285" y="283.3" width="171" height="80.5" rx="10" ry="10" fill="#1000fa" opacity="0.5"/><rect x="255.5" y="283.5" width="229" height="230" fill="none" stroke="#fff" stroke-width="0.9" opacity="0.75"/><rect x="255.5" y="283.5" width="229" height="230" fill="none" stroke="#222" stroke-width="0.9" stroke-dasharray="2 2.4" opacity="0.85"/><rect x="285.5" y="283.5" width="170" height="80" fill="none" stroke="#fff" stroke-width="0.9" stroke-dasharray="2 2.4" opacity="0.9"/><rect x="285.5" y="283.5" width="170" height="80" fill="none" stroke="#333" stroke-width="0.9" stroke-dasharray="2 2.4" stroke-dashoffset="2.2" opacity="0.7"/><g transform="translate(250.5 277.5) rotate(45)"><path d="M-4.6 0 L-1.8 -2.3 V-0.8 H1.8 V-2.3 L4.6 0 L1.8 2.3 V0.8 H-1.8 V2.3 Z" fill="#0a0a0a"/></g><g transform="translate(370.5 275.5) rotate(90)"><path d="M-4.6 0 L-1.8 -2.3 V-0.8 H1.8 V-2.3 L4.6 0 L1.8 2.3 V0.8 H-1.8 V2.3 Z" fill="#0a0a0a"/></g><g transform="translate(489.5 277.5) rotate(-45)"><path d="M-4.6 0 L-1.8 -2.3 V-0.8 H1.8 V-2.3 L4.6 0 L1.8 2.3 V0.8 H-1.8 V2.3 Z" fill="#0a0a0a"/></g><g transform="translate(248.5 398.5) rotate(0)"><path d="M-4.6 0 L-1.8 -2.3 V-0.8 H1.8 V-2.3 L4.6 0 L1.8 2.3 V0.8 H-1.8 V2.3 Z" fill="#0a0a0a"/></g><g transform="translate(491.5 398.5) rotate(0)"><path d="M-4.6 0 L-1.8 -2.3 V-0.8 H1.8 V-2.3 L4.6 0 L1.8 2.3 V0.8 H-1.8 V2.3 Z" fill="#0a0a0a"/></g><g transform="translate(250.5 518.5) rotate(-45)"><path d="M-4.6 0 L-1.8 -2.3 V-0.8 H1.8 V-2.3 L4.6 0 L1.8 2.3 V0.8 H-1.8 V2.3 Z" fill="#0a0a0a"/></g><g transform="translate(370.5 520.5) rotate(90)"><path d="M-4.6 0 L-1.8 -2.3 V-0.8 H1.8 V-2.3 L4.6 0 L1.8 2.3 V0.8 H-1.8 V2.3 Z" fill="#0a0a0a"/></g><g transform="translate(489.5 518.5) rotate(45)"><path d="M-4.6 0 L-1.8 -2.3 V-0.8 H1.8 V-2.3 L4.6 0 L1.8 2.3 V0.8 H-1.8 V2.3 Z" fill="#0a0a0a"/></g></g></svg></div>
<div class="a" style="left:745px;top:70.5px;width:501px;height:532px;background:#303030;"></div>
<div class="a" style="left:745px;top:70.5px;width:501px;height:347px;background:#2c2c2c;"></div>
<div class="a" style="left:745px;top:96px;width:501px;height:1px;background:#262626;"></div>
<div class="a" style="left:745px;top:417px;width:501px;height:1px;background:#282828;"></div>
<svg style="left:757.0px;top:77.0px;" width="12" height="12" viewBox="0 0 12 12"><path d="M1.5 1 H7 L10 4 V11 H1.5Z" fill="none" stroke="#ececec" stroke-width="1.7" stroke-linejoin="round"/><path d="M7.5 8.2 L11.5 8.2 M9.8 6.2 L11.8 8.2 L9.8 10.2" stroke="#4caf50" stroke-width="1.5" fill="none"/></svg>
<svg style="left:800.0px;top:77.0px;" width="12" height="12" viewBox="0 0 12 12"><path d="M1 1.5 H10.5 M1 1.5 V10.5" stroke="#ececec" stroke-width="1.3" fill="none"/><path d="M3.5 10.5 L4.3 8 L10 2.2 L11.3 3.5 L5.6 9.3 Z" fill="#3d9bdc" stroke="#ececec" stroke-width="0.6"/></svg>
<svg style="left:843.0px;top:77.0px;" width="12" height="12" viewBox="0 0 12 12"><path d="M1.5 2.2h8" stroke="#3d9bdc" stroke-width="2.2" stroke-linecap="round"/><path d="M3 6h8" stroke="#ececec" stroke-width="2.2" stroke-linecap="round"/><path d="M1.5 9.8h8" stroke="#3d9bdc" stroke-width="2.2" stroke-linecap="round"/></svg>
<svg style="left:885.0px;top:77.0px;" width="12" height="12" viewBox="0 0 12 12"><path d="M2 3 L6.5 1 L10.5 2.5 V9.5 L6 11.5 L2 10Z" fill="#ececec"/><path d="M4.2 3.5v6M6.2 3v7M8.4 3.4v6" stroke="#2c2c2c" stroke-width="0.9"/></svg>
<svg style="left:928.0px;top:77.0px;" width="12" height="12" viewBox="0 0 12 12"><path d="M1.5 10.5 L5.5 6.5 L10.5 1.5" stroke="#ececec" stroke-width="1.2" fill="none"/><rect x="4" y="5" width="3" height="3" fill="#ececec"/><path d="M7.5 1.5h3v3" stroke="#ececec" stroke-width="1.2" fill="none"/><circle cx="2" cy="10" r="1.2" fill="#bbb"/></svg>
<svg style="left:971.0px;top:77.0px;" width="12" height="12" viewBox="0 0 12 12"><circle cx="5" cy="5" r="3.6" fill="none" stroke="#ececec" stroke-width="1.8"/><path d="M7.7 7.7 L11 11" stroke="#ececec" stroke-width="2"/></svg>
<svg style="left:1014.0px;top:77.0px;" width="12" height="12" viewBox="0 0 12 12"><path d="M1 8.5 L4.5 5 V7 H7 V10 H4.5 V12Z" fill="#ececec"/><circle cx="8" cy="4" r="3.4" fill="#3d9bdc"/><circle cx="8" cy="4" r="1.2" fill="#bfe3ff"/></svg>
<svg style="left:1056.0px;top:77.0px;" width="12" height="12" viewBox="0 0 12 12"><path d="M1.5 1.5 H10.5 V4 H9.3 V3.3 H7 V10 H8.2 V11 H3.8 V10 H5 V3.3 H2.7 V4 H1.5Z" fill="#ececec"/></svg>
<svg style="left:1099.0px;top:77.0px;" width="12" height="12" viewBox="0 0 12 12"><rect x="1" y="6" width="5.5" height="5.5" fill="#ececec"/><path d="M4 5.5 L9 1.5 L11.5 4.5 L8 7.5Z" fill="#4caf50"/><path d="M7 8 l3 2.5" stroke="#4caf50" stroke-width="1.4"/></svg>
<svg style="left:1141.5px;top:77.0px;" width="12" height="12" viewBox="0 0 12 12"><path d="M2 0.8v10.4" stroke="#ececec" stroke-width="1.4"/><rect x="3.8" y="2.2" width="6.8" height="2.8" fill="#ececec"/><rect x="3.8" y="7" width="4.3" height="2.8" fill="#ececec"/></svg>
<svg style="left:1188.0px;top:77.0px;" width="12" height="12" viewBox="0 0 12 12"><path d="M10.6 6 A4.6 4.6 0 1 1 6 1.4" fill="none" stroke="#ececec" stroke-width="1.6"/><path d="M5.2 0 L8.2 1.5 L5.4 3.6Z" fill="#ececec"/><path d="M6 6 L9.5 9.5" stroke="#ececec" stroke-width="1.5"/><circle cx="6" cy="6" r="1.4" fill="#ececec"/></svg>
<svg style="left:1157.5px;top:79.5px;" width="7" height="7" viewBox="0 0 7 7"><path d="M1 1 L6 6 M6 1 L1 6" stroke="#9a9a9a" stroke-width="1.1"/></svg>
<div class="a" style="left:1135px;top:93.5px;width:40px;height:2px;background:#3f74c9;"></div>
<div class="a" style="left:1224px;top:73px;width:22px;height:21px;background:#333;border-radius:3px;"></div>
<svg style="left:1230.5px;top:80px;" width="9" height="6" viewBox="0 0 9 6"><path d="M1 1 L4.5 4.5 L8 1" fill="none" stroke="#8a8a8a" stroke-width="1.4"/></svg>
<svg style="left:756.5px;top:100.5px;" width="8" height="9" viewBox="0 0 8 9"><path d="M0.5 2h5M2.5 4.6h5M0.5 7.2h5" stroke="#ececec" stroke-width="1.5"/></svg>
<div class="a" style="left:751px;top:112.3px;width:42px;height:2.6px;background:#2c5199;"></div>
<svg style="left:804.5px;top:101px;" width="9" height="9" viewBox="0 0 9 9"><path d="M0.3 1.4h8.4M0.3 4.5h8.4M0.3 7.6h8.4" stroke="#ececec" stroke-width="1.9"/><path d="M3 0v9M6 0v9" stroke="#2c2c2c" stroke-width="0.9"/></svg>
<svg style="left:860.5px;top:100.5px;" width="10" height="10" viewBox="0 0 10 10"><circle cx="5" cy="5" r="3.4" fill="none" stroke="#ececec" stroke-width="2.2" stroke-dasharray="2.2 1.2"/></svg>
<svg style="left:754.5px;top:143px;" width="10" height="10" viewBox="0 0 10 10"><rect x="0.6" y="0.6" width="8.8" height="8.8" rx="1" fill="none" stroke="#3f8f43" stroke-width="1"/><rect x="2.4" y="2.4" width="5.2" height="5.2" fill="#ececec"/></svg>
<svg style="left:755.5px;top:166.5px;" width="10" height="9" viewBox="0 0 10 9"><path d="M1 1.5h6M3 4.5h6M1 7.5h6" stroke="#ececec" stroke-width="1.5"/></svg>
<div class="a" style="left:777px;top:183px;width:86px;height:22.5px;background:#292929;border-radius:3px;box-shadow:0 0 0 1px #252525;"></div>
<svg style="left:851px;top:191.5px;" width="9" height="6" viewBox="0 0 9 6"><path d="M1 1 L4.5 4.5 L8 1" fill="none" stroke="#e0e0e0" stroke-width="1.5"/></svg>
<svg style="left:753px;top:208px;" width="12" height="16" viewBox="0 0 12 16"><path d="M8.2 0.5V15.5" stroke="#3a9a40" stroke-width="1.1"/><rect x="0.5" y="4.5" width="6.5" height="3" fill="#ececec"/><rect x="1.5" y="8.5" width="5.5" height="3.2" fill="#ececec"/></svg>
<svg style="left:771px;top:208px;" width="12" height="16" viewBox="0 0 12 16"><path d="M2 0.5V15.5" stroke="#3a9a40" stroke-width="1.1"/><rect x="3.5" y="4.5" width="6.5" height="3" fill="#ececec"/><rect x="3.5" y="8.5" width="5.5" height="3.2" fill="#ececec"/></svg>
<svg style="left:789px;top:208px;" width="12" height="16" viewBox="0 0 12 16"><path d="M6 0.5V15.5" stroke="#3a9a40" stroke-width="1.1"/><rect x="1" y="4.5" width="4" height="3" fill="#ececec"/><rect x="7" y="4.5" width="4" height="3" fill="#ececec"/><rect x="0.5" y="8.5" width="4.5" height="3.2" fill="#ececec"/><rect x="7" y="8.5" width="4.5" height="3.2" fill="#ececec"/><rect x="5" y="5.5" width="2" height="1.2" fill="#ececec"/><rect x="5" y="9.5" width="2" height="1.2" fill="#ececec"/></svg>
<svg style="left:807px;top:208px;" width="12" height="16" viewBox="0 0 12 16"><path d="M8.2 0.5V15.5" stroke="#3a9a40" stroke-width="1.1"/><rect x="0.5" y="4.5" width="6.5" height="3" fill="#ececec"/><rect x="1.5" y="8.5" width="5.5" height="3.2" fill="#ececec"/></svg>
<svg style="left:825px;top:208px;" width="12" height="16" viewBox="0 0 12 16"><path d="M2 0.5V15.5" stroke="#3a9a40" stroke-width="1.1"/><rect x="3.5" y="4.5" width="6.5" height="3" fill="#ececec"/><rect x="3.5" y="8.5" width="5.5" height="3.2" fill="#ececec"/></svg>
<svg style="left:840.5px;top:210px;" width="13" height="13" viewBox="0 0 13 13"><text x="3" y="9.5" font-size="10" fill="#ececec" font-family="Liberation Sans,sans-serif">a</text><path d="M1.5 0V12" stroke="#3a9a40" stroke-width="1"/></svg>
<svg style="left:753px;top:232px;" width="14" height="14" viewBox="0 0 14 14"><path d="M0.5 10.3H13.5" stroke="#3a9a40" stroke-width="1.1"/><rect x="3.5" y="2.5" width="3" height="7" fill="#ececec"/><rect x="7.8" y="4" width="3" height="5.5" fill="#ececec"/></svg>
<svg style="left:771px;top:232px;" width="14" height="14" viewBox="0 0 14 14"><path d="M0.5 2.6H13.5" stroke="#3a9a40" stroke-width="1.1"/><rect x="3.5" y="3.5" width="3" height="5" fill="#ececec"/><rect x="7.8" y="3.5" width="3" height="6.5" fill="#ececec"/></svg>
<svg style="left:788px;top:232px;" width="14" height="14" viewBox="0 0 14 14"><path d="M0.5 6.8H13.5" stroke="#3a9a40" stroke-width="1.1"/><rect x="3.5" y="2" width="3" height="9.5" fill="#ececec"/><rect x="7.8" y="3" width="3" height="7.5" fill="#ececec"/></svg>
<svg style="left:805px;top:232px;" width="14" height="14" viewBox="0 0 14 14"><path d="M0.5 10.3H13.5" stroke="#3a9a40" stroke-width="1.1"/><rect x="3.5" y="2.5" width="3" height="7" fill="#ececec"/><rect x="7.8" y="4" width="3" height="5.5" fill="#ececec"/></svg>
<svg style="left:823px;top:232px;" width="14" height="14" viewBox="0 0 14 14"><path d="M0.5 2.6H13.5" stroke="#3a9a40" stroke-width="1.1"/><rect x="3.5" y="3.5" width="3" height="5" fill="#ececec"/><rect x="7.8" y="3.5" width="3" height="6.5" fill="#ececec"/></svg>
<svg style="left:841.5px;top:233.5px;" width="13" height="13" viewBox="0 0 13 13"><text x="3" y="9.5" font-size="10" fill="#ececec" font-family="Liberation Sans,sans-serif">y</text><path d="M0 10.5H6" stroke="#3a9a40" stroke-width="1"/><rect x="8.5" y="3" width="1.6" height="3" fill="#ccc"/><rect x="10.6" y="3" width="1.4" height="3" fill="#ccc"/></svg>
<svg style="left:753px;top:277px;" width="13" height="14" viewBox="0 0 13 14"><path d="M2.2 0V5M7.4 0V5" stroke="#9a9a9a" stroke-width="0.8"/><rect x="1" y="5" width="3.8" height="7.5" fill="#ececec"/><rect x="6.3" y="5" width="3.8" height="5.5" fill="#ececec"/></svg>
<svg style="left:771px;top:277px;" width="13" height="14" viewBox="0 0 13 14"><path d="M4.6 0V5M9.8 0V5" stroke="#9a9a9a" stroke-width="0.8"/><rect x="1" y="5" width="3.8" height="7.5" fill="#ececec"/><rect x="6.3" y="5" width="3.8" height="5.5" fill="#ececec"/></svg>
<svg style="left:789px;top:277px;" width="13" height="14" viewBox="0 0 13 14"><path d="M3.4 0V5M8.6 0V5" stroke="#9a9a9a" stroke-width="0.8"/><rect x="1" y="5" width="3.8" height="7.5" fill="#ececec"/><rect x="6.3" y="5" width="3.8" height="5.5" fill="#ececec"/></svg>
<svg style="left:807px;top:277px;" width="13" height="14" viewBox="0 0 13 14"><path d="M1.5 2.5H11.5M1.5 2.5V5M11.5 2.5V5M6.5 2.5V5" stroke="#3a9a40" stroke-width="0.9" fill="none"/><rect x="1" y="5" width="3.8" height="7.5" fill="#ececec"/><rect x="6.3" y="5" width="3.8" height="5.5" fill="#ececec"/><rect x="10.6" y="5" width="1.8" height="7" fill="#ececec"/></svg>
<svg style="left:824.5px;top:278.5px;" width="13" height="13" viewBox="0 0 13 13"><text x="3" y="9.5" font-size="10" fill="#ececec" font-family="Liberation Sans,sans-serif">ay</text><path d="M1 1.2H7" stroke="#3a9a40" stroke-width="1"/></svg>
<svg style="left:753px;top:301px;" width="13" height="13" viewBox="0 0 13 13"><path d="M0 2.7H4M0 7.9H4" stroke="#9a9a9a" stroke-width="0.8"/><rect x="3.5" y="1.5" width="7.5" height="3.6" fill="#ececec"/><rect x="3.5" y="6.7" width="6" height="3.6" fill="#ececec"/></svg>
<svg style="left:771px;top:301px;" width="13" height="13" viewBox="0 0 13 13"><path d="M0 5.1H4M0 10.3H4" stroke="#9a9a9a" stroke-width="0.8"/><rect x="3.5" y="1.5" width="7.5" height="3.6" fill="#ececec"/><rect x="3.5" y="6.7" width="6" height="3.6" fill="#ececec"/></svg>
<svg style="left:789px;top:301px;" width="13" height="13" viewBox="0 0 13 13"><path d="M0 3.9H4M0 9.1H4" stroke="#9a9a9a" stroke-width="0.8"/><rect x="3.5" y="1.5" width="7.5" height="3.6" fill="#ececec"/><rect x="3.5" y="6.7" width="6" height="3.6" fill="#ececec"/></svg>
<svg style="left:807px;top:301px;" width="13" height="13" viewBox="0 0 13 13"><path d="M1.2 1.5V11.5M1.2 1.5H3.5M1.2 11.5H3.5M1.2 6.5H3.5" stroke="#3a9a40" stroke-width="0.9" fill="none"/><rect x="3.5" y="1.5" width="7.5" height="3.6" fill="#ececec"/><rect x="3.5" y="6.7" width="6" height="3.6" fill="#ececec"/></svg>
<svg style="left:824.5px;top:301px;" width="13" height="13" viewBox="0 0 13 13"><text x="3" y="9.5" font-size="10" fill="#ececec" font-family="Liberation Sans,sans-serif">y</text><path d="M1.5 3.5V10.5H3" stroke="#3a9a40" stroke-width="1" fill="none"/></svg>
<svg style="left:753px;top:345.5px;" width="12" height="12" viewBox="0 0 12 12"><circle cx="3" cy="3" r="1.7" fill="none" stroke="#ececec" stroke-width="1.2"/><circle cx="9" cy="2.5" r="1.4" fill="#ececec"/><circle cx="4.5" cy="9.5" r="1.5" fill="#ececec"/><circle cx="10" cy="9" r="1.3" fill="#ececec"/><path d="M3 3L9 2.5L10 9L4.5 9.5Z" fill="none" stroke="#ececec" stroke-width="0.8"/></svg>
<svg style="left:771px;top:345.5px;" width="12" height="12" viewBox="0 0 12 12"><rect x="1.5" y="1" width="3.6" height="3.6" fill="#ececec"/><rect x="6.5" y="6.5" width="4.2" height="4.2" fill="#ececec"/><rect x="1.5" y="6.5" width="3.6" height="4.6" fill="#3d9bdc"/><path d="M6.5 2.5h4M9 1l1.8 1.5L9 4" stroke="#ececec" stroke-width="1" fill="none"/></svg>
<svg style="left:789px;top:345.5px;" width="12" height="12" viewBox="0 0 12 12"><rect x="1.5" y="1" width="3.6" height="3.6" fill="#ececec"/><rect x="6.5" y="6.5" width="4.2" height="4.2" fill="#ececec"/><rect x="1.5" y="6.5" width="3.6" height="4.6" fill="#3d9bdc"/><path d="M6.5 2.5h4M9 1l1.8 1.5L9 4" stroke="#ececec" stroke-width="1" fill="none"/></svg>
<svg style="left:807px;top:345.5px;" width="12" height="12" viewBox="0 0 12 12"><rect x="1.5" y="1" width="3.6" height="3.6" fill="#ececec"/><rect x="6.5" y="6.5" width="4.2" height="4.2" fill="#ececec"/><rect x="1.5" y="6.5" width="3.6" height="4.6" fill="#3d9bdc"/><path d="M6.5 2.5h4M9 1l1.8 1.5L9 4" stroke="#ececec" stroke-width="1" fill="none"/></svg>
<svg style="left:825px;top:345.5px;" width="12" height="12" viewBox="0 0 12 12"><circle cx="4" cy="3.3" r="2" fill="#ececec"/><circle cx="8.6" cy="3.3" r="2" fill="#ececec"/><circle cx="2.6" cy="7.4" r="1.8" fill="#ececec"/><circle cx="6.3" cy="8.6" r="2.2" fill="#ececec"/><circle cx="10" cy="7.4" r="1.8" fill="#ececec"/></svg>
<svg style="left:842px;top:345.5px;" width="12" height="12" viewBox="0 0 12 12"><circle cx="2.5" cy="6" r="1.8" fill="#ececec"/><circle cx="9.5" cy="2.3" r="1.7" fill="#ececec"/><circle cx="9.5" cy="9.7" r="1.7" fill="#ececec"/><path d="M2.5 6L9.5 2.3M2.5 6L9.5 9.7" stroke="#ececec" stroke-width="1.1"/></svg>
<div class="a" style="left:765.5px;top:388.5px;width:65px;height:22px;background:#2b2b2b;border-radius:3px;box-shadow:0 0 0 1px #2a2a2a;"></div>
<svg style="left:801px;top:394.5px;" width="28" height="10" viewBox="0 0 28 10"><path d="M0.5 5H8" stroke="#f0f0f0" stroke-width="1.5"/><path d="M17 5h8M21 1v8" stroke="#f0f0f0" stroke-width="1.6"/></svg>
<div class="a" style="left:847px;top:388.5px;width:65px;height:22px;background:#2b2b2b;border-radius:3px;box-shadow:0 0 0 1px #2a2a2a;"></div>
<svg style="left:882px;top:394.5px;" width="28" height="10" viewBox="0 0 28 10"><path d="M0.5 5H8" stroke="#f0f0f0" stroke-width="1.5"/><path d="M17 5h8M21 1v8" stroke="#f0f0f0" stroke-width="1.6"/></svg>
<svg style="left:920.5px;top:394.5px;" width="10" height="10" viewBox="0 0 10 10"><path d="M1.5 3v7M5 1v9M8.5 0.5v9.5" stroke="#ececec" stroke-width="2"/><circle cx="1.5" cy="1" r="1" fill="#ececec"/></svg>
<svg style="left:1258px;top:77px;" width="12" height="12" viewBox="0 0 12 12"><path d="M2 1 H7 L10 4 V11 H2Z" fill="none" stroke="#ececec" stroke-width="1.7" stroke-linejoin="round"/><circle cx="10" cy="1.8" r="1.6" fill="#4caf50"/></svg>
<svg style="left:1258px;top:100px;" width="12" height="12" viewBox="0 0 12 12"><path d="M1 3 H5 L6 4.2 H10.5 V6 H1Z" fill="#ececec"/><path d="M1 10.5 L2.5 6.5 H11.8 L10.3 10.5Z" fill="#ececec"/></svg>
<svg style="left:1258px;top:126px;" width="12" height="12" viewBox="0 0 12 12"><path d="M1 7 H11 V11 H1Z" fill="#ececec"/><path d="M3 7 L4 4.5 H8 L9 7" fill="#bbb"/><path d="M6 0v4.5M4 3 L6 5 L8 3" stroke="#4caf50" stroke-width="1.5" fill="none"/></svg>
<svg style="left:1258px;top:149px;" width="12" height="12" viewBox="0 0 12 12"><rect x="3" y="1" width="6" height="3" fill="#ececec"/><rect x="1" y="4.5" width="10" height="4.5" rx="1" fill="#ececec"/><rect x="3" y="7.5" width="6" height="3.5" fill="#ececec" stroke="#353535" stroke-width="0.8"/></svg>
<svg style="left:1258px;top:177px;" width="12" height="12" viewBox="0 0 12 12"><path d="M4 1 H8 L11 4 V11 H4Z" fill="none" stroke="#ececec" stroke-width="1.6" stroke-linejoin="round"/><path d="M0 7h5M3.2 5 L5.4 7 L3.2 9" stroke="#4caf50" stroke-width="1.5" fill="none"/></svg>
<svg style="left:1258px;top:201px;" width="12" height="12" viewBox="0 0 12 12"><path d="M1.5 1 H6 L9 4 V11 H1.5Z" fill="none" stroke="#ececec" stroke-width="1.6" stroke-linejoin="round"/><path d="M6.5 7.5h5M9.6 5.5 L11.8 7.5 L9.6 9.5" stroke="#4caf50" stroke-width="1.5" fill="none"/></svg>
<svg style="left:1258px;top:229px;" width="12" height="12" viewBox="0 0 12 12"><path d="M3 5 H8 Q10.5 5 10.5 7.5 Q10.5 10 8 10 H6" fill="none" stroke="#ececec" stroke-width="1.6"/><path d="M4.5 2.5 L1.8 5 L4.5 7.5" fill="none" stroke="#ececec" stroke-width="1.6"/></svg>
<svg style="left:1258px;top:253px;" width="12" height="12" viewBox="0 0 12 12"><path d="M9 5 H4 Q1.5 5 1.5 7.5 Q1.5 10 4 10 H6" fill="none" stroke="#777" stroke-width="1.4"/><path d="M7.5 2.5 L10.2 5 L7.5 7.5" fill="none" stroke="#777" stroke-width="1.4"/></svg>
<svg style="left:1258px;top:281px;" width="12" height="12" viewBox="0 0 12 12"><rect x="1" y="1" width="7" height="7" fill="#ececec"/><rect x="4.5" y="4.5" width="7" height="7" fill="#ececec" stroke="#353535" stroke-width="1"/></svg>
<svg style="left:1258px;top:306px;" width="12" height="12" viewBox="0 0 12 12"><path d="M3 1 L8.5 8.5 M9 1 L3.5 8.5" stroke="#ececec" stroke-width="1.4"/><circle cx="3" cy="9.7" r="1.6" fill="none" stroke="#ececec" stroke-width="1.3"/><circle cx="9" cy="9.7" r="1.6" fill="none" stroke="#ececec" stroke-width="1.3"/></svg>
<svg style="left:1258px;top:331px;" width="12" height="12" viewBox="0 0 12 12"><rect x="1.5" y="1.5" width="9" height="10" rx="1" fill="none" stroke="#ececec" stroke-width="1.5"/><rect x="3.8" y="4" width="4.4" height="5.5" fill="#ececec"/><rect x="4" y="0.3" width="4" height="2.2" fill="#ececec"/></svg>
<svg style="left:1258px;top:358px;" width="12" height="12" viewBox="0 0 12 12"><circle cx="5.2" cy="5.2" r="3.8" fill="none" stroke="#ececec" stroke-width="1.7"/><path d="M8 8 L11 11" stroke="#ececec" stroke-width="2"/><rect x="3.5" y="3.5" width="3.4" height="3.4" fill="#ececec"/></svg>
<svg style="left:1258px;top:382px;" width="12" height="12" viewBox="0 0 12 12"><circle cx="5.2" cy="5.2" r="3.8" fill="none" stroke="#ececec" stroke-width="1.7"/><path d="M8 8 L11 11" stroke="#ececec" stroke-width="2"/><path d="M3.5 6.8 L5.2 3.4 L7 6.8Z" fill="#ececec"/></svg>
<svg style="left:1258px;top:406.5px;" width="12" height="12" viewBox="0 0 12 12"><circle cx="5.2" cy="5.2" r="3.8" fill="none" stroke="#ececec" stroke-width="1.7"/><path d="M8 8 L11 11" stroke="#ececec" stroke-width="2"/><rect x="3.8" y="3" width="2.8" height="4.4" fill="#ececec"/></svg>
<svg style="left:1258px;top:431px;" width="12" height="12" viewBox="0 0 12 12"><rect x="2.5" y="1.5" width="7" height="9" fill="none" stroke="#ececec" stroke-width="1.4"/><path d="M0 1.5h2M10 1.5h2M0 10.5h2M10 10.5h2" stroke="#ececec" stroke-width="1"/><rect x="5" y="4.5" width="2" height="3" fill="#ececec"/></svg>
<svg style="left:1258px;top:459px;" width="12" height="12" viewBox="0 0 12 12"><rect x="1" y="1" width="7" height="7" fill="#ececec"/><rect x="4.5" y="4.5" width="7" height="7" fill="#22b14c"/></svg>
<svg style="left:1258px;top:483.5px;" width="12" height="12" viewBox="0 0 12 12"><rect x="1" y="1" width="7" height="7" fill="#ececec"/><rect x="4.5" y="4.5" width="7" height="7" fill="#353535" stroke="#ececec" stroke-width="1.3"/><rect x="6.5" y="6.5" width="3" height="3.4" fill="#ececec"/></svg>
<svg style="left:1258px;top:508px;" width="12" height="12" viewBox="0 0 12 12"><rect x="1" y="1" width="7" height="7" fill="#ececec"/><rect x="4.5" y="4.5" width="7" height="7" fill="#353535" stroke="#ececec" stroke-width="1.3"/><path d="M6.5 8h3.2" stroke="#ececec" stroke-width="1.3"/></svg>
<svg style="left:1258px;top:535.5px;" width="12" height="12" viewBox="0 0 12 12"><circle cx="5" cy="5.5" r="3" fill="#ececec"/><rect x="6" y="6.5" width="4" height="3.6" fill="#bbb"/><path d="M0.5 3V0.8H3M9 0.8h2.5V3M0.5 9v2.3H3M9 11.3h2.5V9" stroke="#4caf50" stroke-width="0.9" fill="none"/></svg>
<svg style="left:1258px;top:560px;" width="12" height="12" viewBox="0 0 12 12"><circle cx="6" cy="6" r="2.8" fill="#ececec"/><path d="M1 1l2.5 2.5M11 1L8.5 3.5M1 11l2.5-2.5M11 11L8.5 8.5" stroke="#ececec" stroke-width="1.3"/></svg>
<div class="a" style="left:1252.5px;top:580.5px;width:23px;height:21px;background:#2f2f2f;border-radius:3px;box-shadow:0 0 0 1px #2a2a2a;"></div>
<svg style="left:1259.5px;top:587.5px;" width="9" height="7" viewBox="0 0 9 7"><path d="M1 1.5 L4.5 5 L8 1.5" fill="none" stroke="#f0f0f0" stroke-width="1.6"/></svg>
<svg style="left:0;top:0" width="1280" height="720" viewBox="0 0 1280 720"><g font-family="'Liberation Sans','Noto Sans CJK JP',sans-serif" fill="#fafafa"><text x="1017" y="466" font-size="28" font-weight="500" textLength="57" lengthAdjust="spacingAndGlyphs">ゼロ</text><text x="1081" y="465.5" font-size="17.5" font-weight="300" textLength="36" lengthAdjust="spacingAndGlyphs">から</text><text x="1031" y="487.5" font-size="18.5" font-weight="300" textLength="75" lengthAdjust="spacingAndGlyphs">はじめて</text><text x="1108" y="488" font-size="20.5" font-weight="700" textLength="115" lengthAdjust="spacingAndGlyphs">クリエイター</text><text x="1043" y="507" font-size="10.5" font-weight="400" textLength="133" lengthAdjust="spacingAndGlyphs" fill="#e8e8e8">zero kara hajimete creator</text><text transform="translate(981.5 437.5) rotate(-17)" font-size="15.5" font-weight="300" textLength="75" lengthAdjust="spacing">初期費用</text><path d="M977 443 Q990 449 1003 443 Q1012 438 1017 436 Q1021 434.5 1020 438 Q1018.5 441 1016.5 438 Q1016 434 1030 431 Q1052 427 1062 418 Q1066 414 1067 410" fill="none" stroke="#fafafa" stroke-width="1.1" stroke-linecap="round"/></g></svg>
<span class="t" style="left:19px;top:3.55px;font-size:11.5px;color:#ffffff;transform:scaleX(0.782);">*ゆきだるま.svg - Inkscape</span>
<span class="t" style="left:5px;top:24.25px;font-size:10.5px;color:#e2e2e2;transform:scaleX(0.722);">ファイル(F)</span>
<span class="t" style="left:56px;top:24.25px;font-size:10.5px;color:#e2e2e2;transform:scaleX(0.886);">編集(E)</span>
<span class="t" style="left:98px;top:24.25px;font-size:10.5px;color:#e2e2e2;transform:scaleX(0.929);">表示(V)</span>
<span class="t" style="left:141.5px;top:24.25px;font-size:10.5px;color:#e2e2e2;transform:scaleX(0.743);">レイヤー(L)</span>
<span class="t" style="left:193px;top:24.25px;font-size:10.5px;color:#e2e2e2;transform:scaleX(0.710);">オブジェクト(O)</span>
<span class="t" style="left:259.5px;top:24.25px;font-size:10.5px;color:#e2e2e2;transform:scaleX(0.771);">パス(P)</span>
<span class="t" style="left:297px;top:24.25px;font-size:10.5px;color:#e2e2e2;transform:scaleX(0.744);">テキスト(T)</span>
<span class="t" style="left:348.5px;top:24.25px;font-size:10.5px;color:#e2e2e2;transform:scaleX(0.701);">フィルター(S)</span>
<span class="t" style="left:406px;top:24.25px;font-size:10.5px;color:#e2e2e2;transform:scaleX(0.738);">エクステンション(N)</span>
<span class="t" style="left:489px;top:24.25px;font-size:10.5px;color:#e2e2e2;transform:scaleX(0.803);">ヘルプ(H)</span>
<span class="t" style="left:343px;top:48.05px;font-size:10.5px;color:#dcdcdc;transform:scaleX(0.756);">X:</span>
<span class="t" style="left:357px;top:47.80px;font-size:10.5px;color:#dcdcdc;transform:scaleX(0.872);">54.613</span>
<span class="t" style="left:436.5px;top:48.05px;font-size:10.5px;color:#dcdcdc;transform:scaleX(0.803);">Y:</span>
<span class="t" style="left:452px;top:47.80px;font-size:10.5px;color:#dcdcdc;transform:scaleX(0.856);">144.258</span>
<span class="t" style="left:549px;top:47.80px;font-size:10.5px;color:#dcdcdc;transform:scaleX(0.903);">97.190</span>
<span class="t" style="left:657px;top:48.05px;font-size:10.5px;color:#dcdcdc;transform:scaleX(0.857);">H:</span>
<span class="t" style="left:672.5px;top:47.80px;font-size:10.5px;color:#dcdcdc;transform:scaleX(0.903);">98.128</span>
<span class="t" style="left:760.5px;top:48.30px;font-size:10px;color:#d8d8d8;transform:scaleX(1.050);">mm</span>
<span class="t" style="left:70.32499999999999px;top:69.95px;font-size:8.5px;color:#e0e0e0;">-25</span>
<span class="t" style="left:129.1px;top:69.95px;font-size:8.5px;color:#e0e0e0;">0</span>
<span class="t" style="left:187.875px;top:69.95px;font-size:8.5px;color:#e0e0e0;">25</span>
<span class="t" style="left:246.65px;top:69.95px;font-size:8.5px;color:#e0e0e0;">50</span>
<span class="t" style="left:305.425px;top:69.95px;font-size:8.5px;color:#e0e0e0;">75</span>
<span class="t" style="left:364.20000000000005px;top:69.95px;font-size:8.5px;color:#e0e0e0;">100</span>
<span class="t" style="left:422.975px;top:69.95px;font-size:8.5px;color:#e0e0e0;">125</span>
<span class="t" style="left:481.75px;top:69.95px;font-size:8.5px;color:#e0e0e0;">150</span>
<span class="t" style="left:540.525px;top:69.95px;font-size:8.5px;color:#e0e0e0;">175</span>
<span class="t" style="left:599.3000000000001px;top:69.95px;font-size:8.5px;color:#e0e0e0;">200</span>
<span class="t" style="left:658.075px;top:69.95px;font-size:8.5px;color:#e0e0e0;">225</span>
<span class="t" style="left:716.85px;top:69.95px;font-size:8.5px;color:#e0e0e0;">2</span>
<span class="t" style="left:0px;top:122.00px;font-size:8px;color:#e0e0e0;left:auto;right:1254.3px;transform-origin:100% 0;transform:rotate(-90deg);">75</span>
<span class="t" style="left:0px;top:180.78px;font-size:8px;color:#e0e0e0;left:auto;right:1254.3px;transform-origin:100% 0;transform:rotate(-90deg);">100</span>
<span class="t" style="left:0px;top:239.55px;font-size:8px;color:#e0e0e0;left:auto;right:1254.3px;transform-origin:100% 0;transform:rotate(-90deg);">125</span>
<span class="t" style="left:0px;top:298.32px;font-size:8px;color:#e0e0e0;left:auto;right:1254.3px;transform-origin:100% 0;transform:rotate(-90deg);">150</span>
<span class="t" style="left:0px;top:357.10px;font-size:8px;color:#e0e0e0;left:auto;right:1254.3px;transform-origin:100% 0;transform:rotate(-90deg);">175</span>
<span class="t" style="left:0px;top:415.88px;font-size:8px;color:#e0e0e0;left:auto;right:1254.3px;transform-origin:100% 0;transform:rotate(-90deg);">200</span>
<span class="t" style="left:0px;top:474.65px;font-size:8px;color:#e0e0e0;left:auto;right:1254.3px;transform-origin:100% 0;transform:rotate(-90deg);">225</span>
<span class="t" style="left:0px;top:533.42px;font-size:8px;color:#e0e0e0;left:auto;right:1254.3px;transform-origin:100% 0;transform:rotate(-90deg);">250</span>
<span class="t" style="left:14px;top:655.40px;font-size:10.2px;color:#e2e2e2;transform:scaleX(0.693);">フィル:</span>
<span class="t" style="left:40.5px;top:655.40px;font-size:10.2px;color:#e2e2e2;transform:scaleX(0.882);">a</span>
<span class="t" style="left:0px;top:668.90px;font-size:10.2px;color:#e2e2e2;transform:scaleX(0.688);">ストローク:</span>
<span class="t" style="left:64.5px;top:669.50px;font-size:9px;color:#d0d0d0;transform:scaleX(1.110);">≠</span>
<span class="t" style="left:92px;top:669.20px;font-size:10.2px;color:#dcdcdc;transform:scaleX(0.908);">1.63</span>
<span class="t" style="left:117px;top:661.90px;font-size:10.2px;color:#dcdcdc;transform:scaleX(0.882);">O:</span>
<span class="t" style="left:135px;top:661.90px;font-size:10.2px;color:#dcdcdc;transform:scaleX(0.926);">75</span>
<span class="t" style="left:191px;top:661.90px;font-size:10.2px;color:#dcdcdc;transform:scaleX(0.912);">Layer 1</span>
<span class="t" style="left:283px;top:661.90px;font-size:10.2px;color:#e0e0e0;transform:scaleX(0.820);">強調表示するには ALT を押しながら項目上にマウスを置き、非表示/ロックするには SHIFT を押しながらクリックします。</span>
<span class="t" style="left:1064.5px;top:654.90px;font-size:10.2px;color:#dcdcdc;transform:scaleX(0.830);">X:</span>
<span class="t" style="left:1082.5px;top:654.90px;font-size:10.2px;color:#dcdcdc;transform:scaleX(0.898);">190.17</span>
<span class="t" style="left:1064.5px;top:668.90px;font-size:10.2px;color:#dcdcdc;transform:scaleX(0.881);">Y:</span>
<span class="t" style="left:1082.5px;top:668.90px;font-size:10.2px;color:#dcdcdc;transform:scaleX(0.898);">169.48</span>
<span class="t" style="left:1119px;top:661.90px;font-size:10.2px;color:#dcdcdc;transform:scaleX(0.883);">Z:</span>
<span class="t" style="left:1140px;top:661.90px;font-size:10.2px;color:#dcdcdc;transform:scaleX(0.907);">93%</span>
<span class="t" style="left:1197px;top:661.90px;font-size:10.2px;color:#dcdcdc;transform:scaleX(0.834);">R:</span>
<span class="t" style="left:1220.5px;top:661.90px;font-size:10.2px;color:#dcdcdc;transform:scaleX(0.920);">0.00°</span>
<span class="t" style="left:768.5px;top:100.50px;font-size:10px;color:#ececec;transform:scaleX(0.975);">整列</span>
<span class="t" style="left:817.5px;top:100.50px;font-size:10px;color:#ececec;transform:scaleX(0.700);">グリッド</span>
<span class="t" style="left:874.5px;top:100.50px;font-size:10px;color:#ececec;transform:scaleX(0.850);">円</span>
<span class="t" style="left:751px;top:124.50px;font-size:10px;color:#f0f0f0;font-weight:500;">整列</span>
<span class="t" style="left:771.5px;top:143.00px;font-size:10px;color:#e6e6e6;transform:scaleX(0.821);">3 回目のクリックでハンドルを整列</span>
<span class="t" style="left:771.5px;top:166.00px;font-size:10px;color:#e6e6e6;transform:scaleX(0.807);">選択オブジェクトをグループとして移動/整列</span>
<span class="t" style="left:751px;top:189.50px;font-size:10px;color:#e6e6e6;transform:scaleX(1.010);">基準:</span>
<span class="t" style="left:781px;top:189.50px;font-size:10px;color:#e0e0e0;transform:scaleX(0.775);">最大オブジェクト</span>
<span class="t" style="left:751px;top:260.50px;font-size:10px;color:#f0f0f0;font-weight:500;">配置</span>
<span class="t" style="left:751px;top:327.50px;font-size:10px;color:#f0f0f0;font-weight:500;">再配置</span>
<span class="t" style="left:751px;top:372.50px;font-size:10px;color:#f0f0f0;font-weight:500;transform:scaleX(0.900);">重なりを除去</span>
<span class="t" style="left:754px;top:394.50px;font-size:10px;color:#e0e0e0;transform:scaleX(0.900);">H:</span>
<span class="t" style="left:772px;top:394.25px;font-size:10.5px;color:#e0e0e0;transform:scaleX(0.890);">0</span>
<span class="t" style="left:836px;top:394.50px;font-size:10px;color:#e0e0e0;transform:scaleX(0.936);">V:</span>
<span class="t" style="left:854px;top:394.25px;font-size:10.5px;color:#e0e0e0;transform:scaleX(0.890);">0</span>
<svg style="left:0;top:0" width="1280" height="720" viewBox="0 0 1280 720"><g font-family="'Liberation Sans','Noto Sans CJK JP',sans-serif" font-weight="900" font-size="30" stroke-linejoin="round"><text x="500.8" y="490.3" textLength="226.2" lengthAdjust="spacing" fill="#0a0a0a" stroke="#0a0a0a" stroke-width="8">何もないところ</text><text x="500.8" y="490.3" textLength="226.2" lengthAdjust="spacing" fill="#fbdf86">何もないところ</text><text x="500.9" y="538.2" textLength="324.2" lengthAdjust="spacing" fill="#0a0a0a" stroke="#0a0a0a" stroke-width="8">クリックして選択解除</text><text x="500.9" y="538.2" textLength="324.2" lengthAdjust="spacing" fill="#fbdf86">クリックして選択解除</text></g><path d="M575 341.7 V351.7 L577.3 349.5 L579 353.2 L580.6 352.5 L579 348.9 H582 Z" fill="#111" stroke="#fff" stroke-width="0.8" stroke-linejoin="round"/></svg>
</body></html>
